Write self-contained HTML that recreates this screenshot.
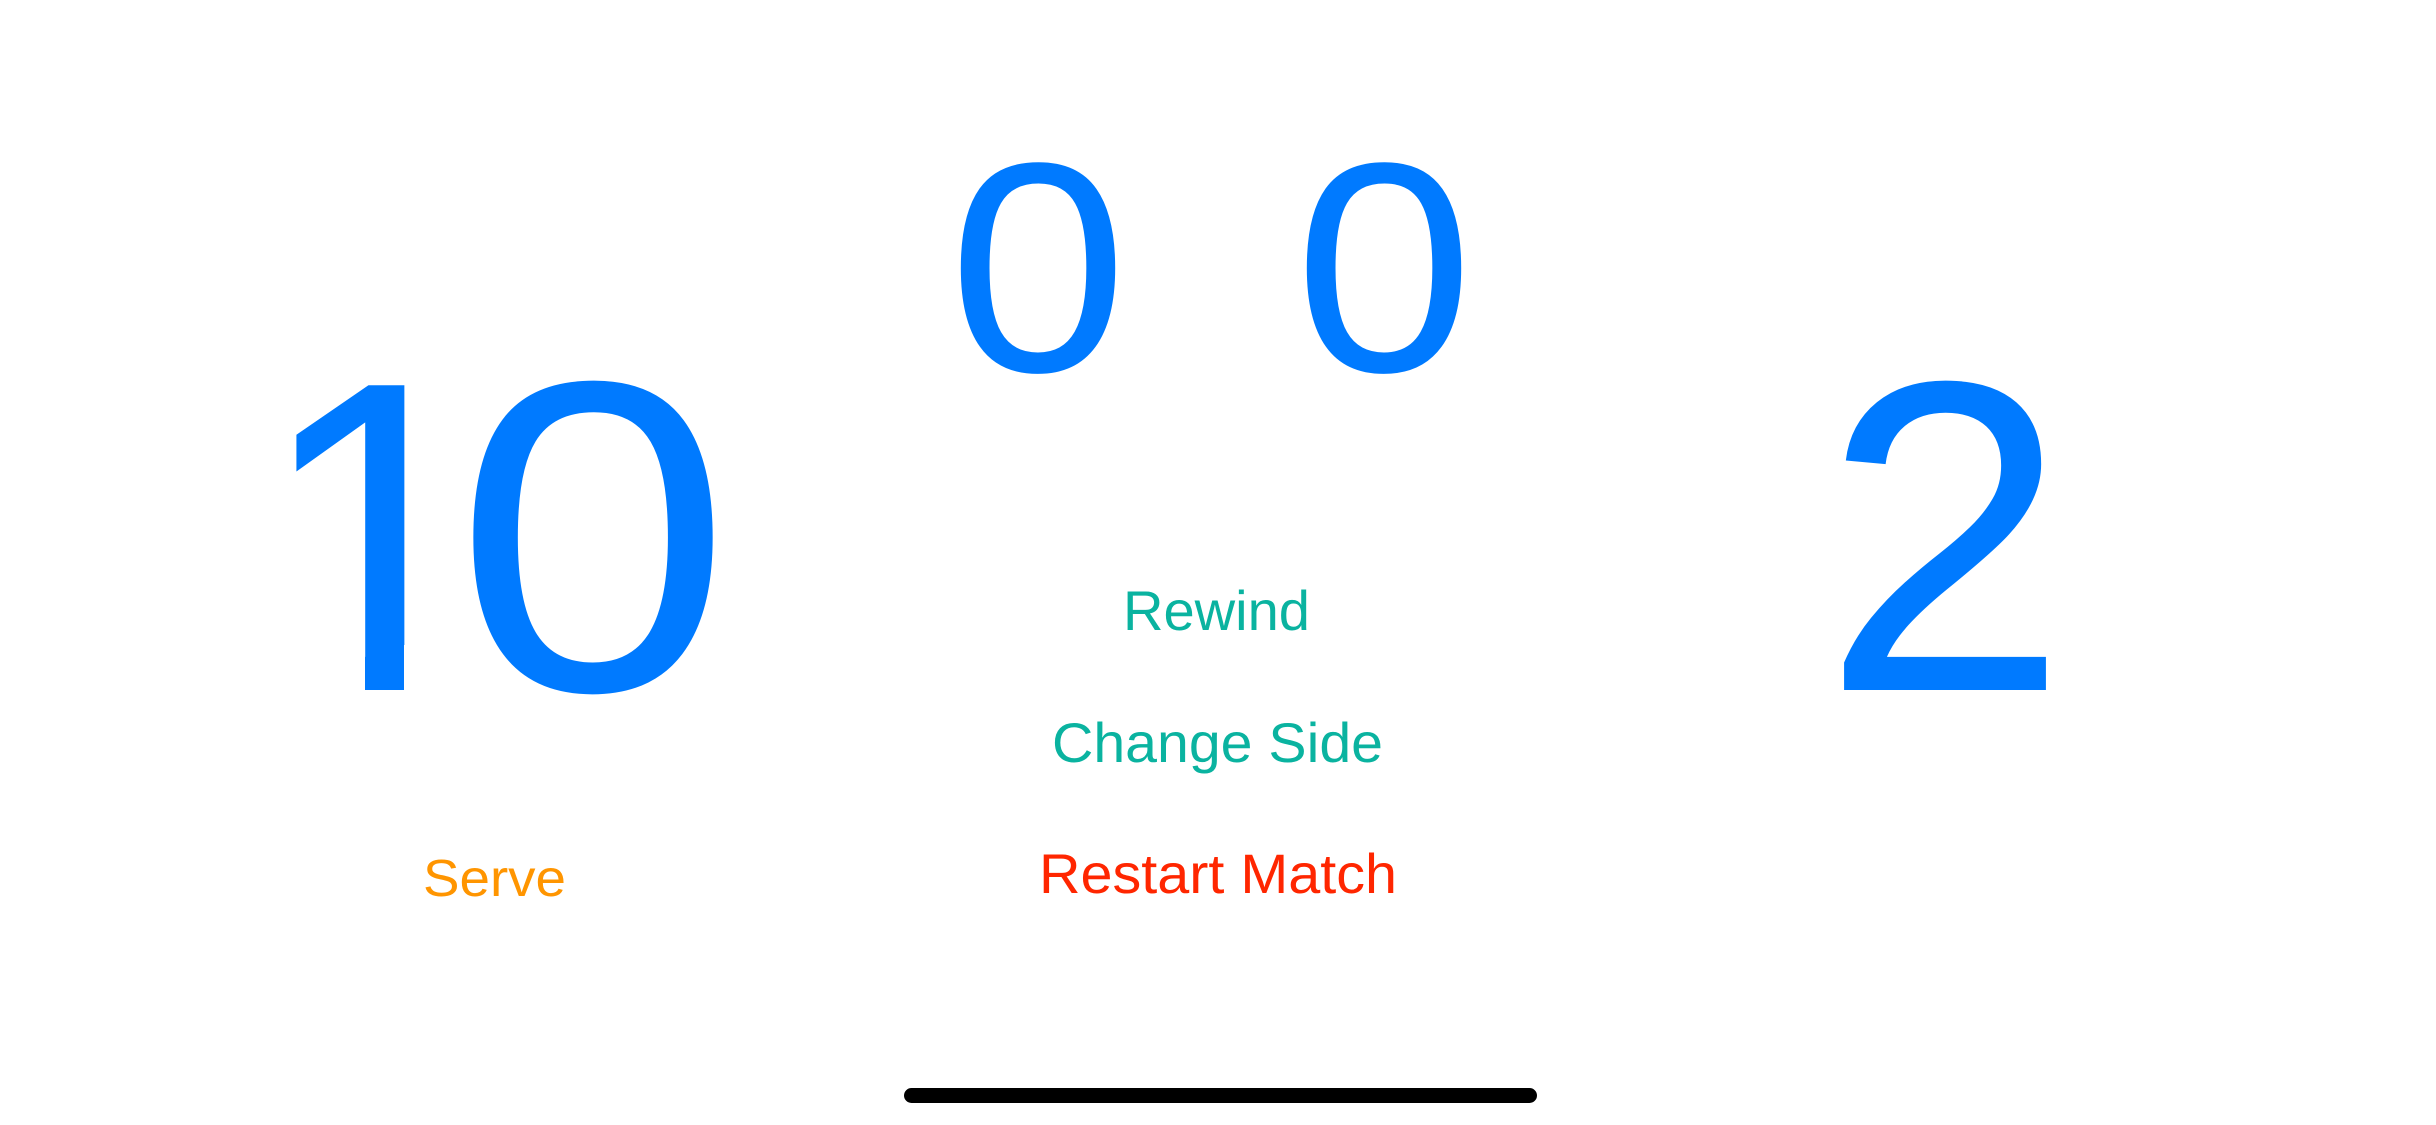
<!DOCTYPE html>
<html><head><meta charset="utf-8"><style>
html,body{margin:0;padding:0;background:#fff;width:2436px;height:1125px;overflow:hidden}
svg{display:block}
text{font-family:"Liberation Sans",sans-serif}
</style></head><body>
<svg width="2436" height="1125" viewBox="0 0 2436 1125">
<defs>
<clipPath id="c1" clipPathUnits="userSpaceOnUse">
<rect x="270" y="300" width="200" height="345"/>
<rect x="365" y="300" width="39" height="400"/>
</clipPath>
</defs>
<g fill="#007aff" text-anchor="middle">
<g clip-path="url(#c1)">
<text transform="translate(377,690)" font-size="443">1</text>
</g>
<text transform="translate(593,690) scale(1.13,1)" font-size="443">0</text>
<text transform="translate(1038,371) scale(1.08,1)" font-size="299">0</text>
<text transform="translate(1384,371) scale(1.08,1)" font-size="299">0</text>
<text transform="translate(1945,690)" font-size="443">2</text>
</g>
<text x="1123" y="630" font-size="56" fill="#0ab3a0" textLength="187" lengthAdjust="spacingAndGlyphs">Rewind</text>
<text x="1052" y="762" font-size="56" fill="#0ab3a0" textLength="331" lengthAdjust="spacingAndGlyphs">Change Side</text>
<text x="1039" y="893" font-size="56" fill="#ff2600" textLength="358" lengthAdjust="spacingAndGlyphs">Restart Match</text>
<text x="423" y="896" font-size="52" fill="#ff9500" textLength="143" lengthAdjust="spacingAndGlyphs">Serve</text>
<rect x="904" y="1088" width="633" height="15" rx="7.5" fill="#000"/>
</svg>
</body></html>
